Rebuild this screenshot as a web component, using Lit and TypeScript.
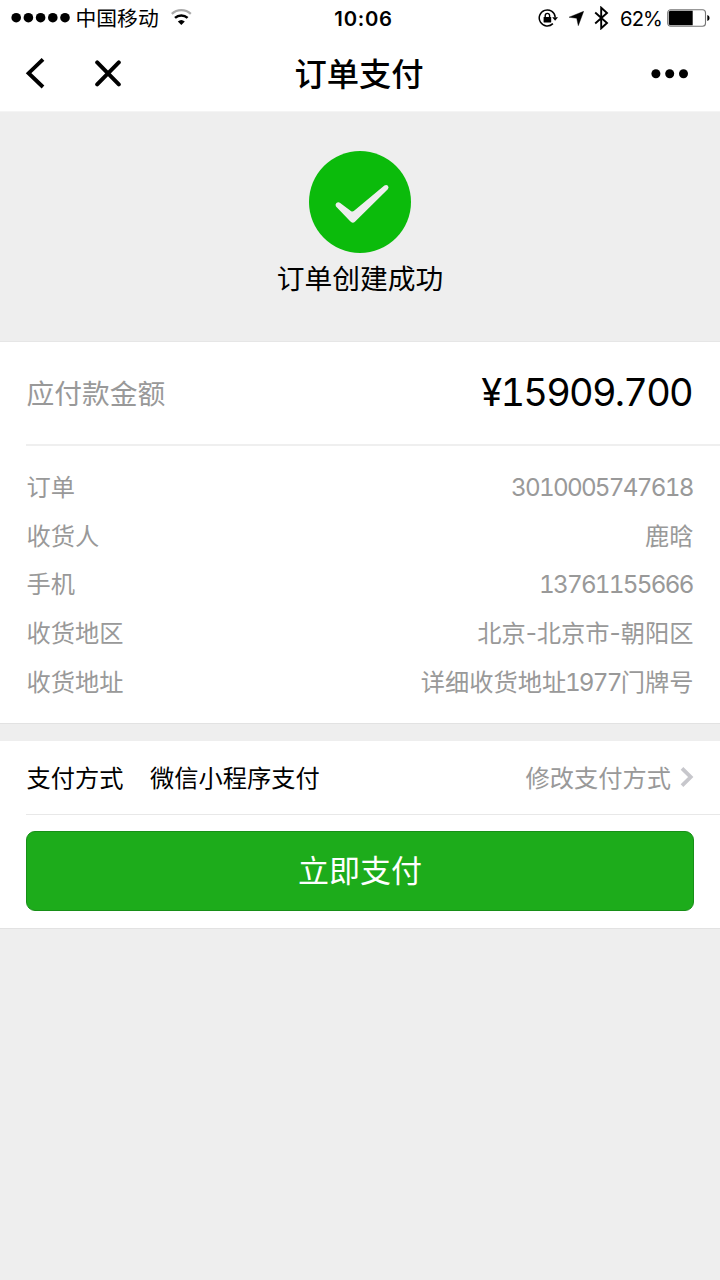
import { LitElement, html, css, svg } from "lit";
import { customElement, property } from "lit/decorators.js";

const DETAILS: [string, string][] = [
  ["订单", "3010005747618"],
  ["收货人", "鹿晗"],
  ["手机", "13761155666"],
  ["收货地区", "北京-北京市-朝阳区"],
  ["收货地址", "详细收货地址1977门牌号"],
];

// Digits run tighter than the Chinese text around them.
const tightDigits = (text: string) =>
  text
    .split(/(\d+)/)
    .filter((part) => part)
    .map((part, _, all) =>
      /\d/.test(part) ? html`<span class="num ${all.length > 1 ? "inline" : ""}">${part}</span>` : part
    );

@customElement("status-bar")
class StatusBar extends LitElement {
  static styles = css`
    :host { display: grid; grid-template-columns: 1fr auto 1fr; align-items: center; height: 36px; padding: 0 10px 0 11px; line-height: 36px; color: #000; }
    svg { display: block; flex: none; }
    .left, .right { display: flex; align-items: center; height: 36px; }
    .right { justify-content: flex-end; }
    .carrier { font-size: 20.8px; margin: 1px 0 -1px 5.5px; }
    .wifi { margin-left: 12px; }
    .time { font-size: 20.3px; font-weight: 600; letter-spacing: 0.7px; margin: 1px 0 -1px; padding-left: 6px; }
    .arrow { margin-left: 11px; }
    .bt { margin-left: 9.5px; }
    .percent { font-size: 20.2px; letter-spacing: -0.9px; margin: 1px 5px -1px 11.5px; }
  `;
  render() {
    return html`
      <div class="left">
        <svg width="59" height="12" viewBox="0 0 59 12">
          ${[0, 1, 2, 3, 4].map((i) => svg`<circle cx=${5.2 + i * 12.2} cy="5.7" r="4.8" />`)}
        </svg>
        <span class="carrier">中国移动</span>
        <svg class="wifi" width="22" height="18" viewBox="0 0 22 18" fill="none">
          <path d="M.8 4.9A14 14 0 0 1 19.8 4.9" stroke="#aaa" stroke-width="2.3" />
          <path d="M4 8.9A9.4 9.4 0 0 1 16.6 8.9" stroke="#000" stroke-width="2.5" />
          <path d="M10.3 16L6.8 12.6Q10.3 9.4 13.8 12.6Z" fill="#000" />
        </svg>
      </div>
      <div class="time">10:06</div>
      <div class="right">
        <svg width="20" height="20" viewBox="0 0 20 20" fill="none" stroke="#000">
          <path d="M14.9 15.6A8 8 0 1 1 17.2 9.2" stroke-width="1.5" />
          <path d="M14.2 9.2H20L17.1 12.8Z" fill="#000" stroke="none" />
          <rect x="5.6" y="9" width="7.6" height="5.6" rx=".6" fill="#000" stroke="none" />
          <path d="M7.2 9.4V7.6a2.2 2.2 0 0 1 4.4 0V9.4" stroke-width="1.4" />
        </svg>
        <svg class="arrow" width="15" height="15" viewBox="0 0 15 15">
          <path d="M14.7.3L0 6.2L7.7 7.3L9.3 14.7Z" stroke="#000" stroke-width=".4" />
        </svg>
        <svg class="bt" width="15" height="24" viewBox="0 0 15 24" fill="none" stroke="#000" stroke-width="1.9">
          <path d="M1.2 6.5L13 17L7.2 22.3V1.7L13 7L1.2 17.5" />
        </svg>
        <span class="percent">62%</span>
        <svg width="43" height="18" viewBox="0 0 43 18">
          <rect x=".7" y=".7" width="37.8" height="16.6" rx="3" fill="#fff" stroke="#777" stroke-width="1.1" />
          <path d="M3.4 1.8H25.7V16.2H3.4Q1.8 16.2 1.8 14.6V3.4Q1.8 1.8 3.4 1.8Z" />
          <path d="M40.3 6Q42.6 6.6 42.6 9Q42.6 11.4 40.3 12Z" />
        </svg>
      </div>
    `;
  }
}

@customElement("nav-bar")
class NavBar extends LitElement {
  @property() heading = "";
  static styles = css`
    :host { display: grid; grid-template-columns: 1fr auto 1fr; align-items: center; height: 76px; padding: 0 31px 0 25px; box-sizing: border-box; border-bottom: 1px solid #f4f4f4; color: #000; }
    svg { display: block; }
    .left { display: flex; align-items: center; gap: 48.5px; }
    .title { font-size: 32.3px; font-weight: 500; line-height: 72px; padding: 3px 0 0 4px; }
    .more { justify-self: end; }
  `;
  render() {
    return html`
      <div class="left">
        <svg width="20" height="32" viewBox="0 0 20 32" fill="none" stroke="#000" stroke-width="3.9">
          <path d="M18 1.4L3.6 15.2L18 29" />
        </svg>
        <svg width="28" height="28" viewBox="0 0 28 28" fill="none" stroke="#000" stroke-width="4" stroke-linecap="round">
          <path d="M3.2 2.4L24.8 24.4M24.8 2.4L3.2 24.4" />
        </svg>
      </div>
      <div class="title">${this.heading}</div>
      <svg class="more" width="38" height="10" viewBox="0 0 38 10">
        <circle cx="4.9" cy="4.7" r="4.5" /><circle cx="18.7" cy="4.7" r="4.5" /><circle cx="32.5" cy="4.7" r="4.5" />
      </svg>
    `;
  }
}

@customElement("app-root")
class AppRoot extends LitElement {
  static styles = css`
    :host { display: block; min-height: 1280px; background: #eee; color: #000; font-family: Inter, "Noto Sans CJK SC", sans-serif; }
    svg { display: block; flex: none; }
    .header { background: #fff; }
    .result { display: flex; flex-direction: column; align-items: center; height: 230px; padding-top: 39px; box-sizing: border-box; border-bottom: 1px solid #e6e6e6; }
    .message { font-size: 27.75px; line-height: 40px; margin-top: 6px; }
    .card { background: #fff; border-bottom: 1px solid #e2e2e2; }
    .amount { display: flex; justify-content: space-between; align-items: center; height: 104px; box-sizing: border-box; margin-left: 26px; padding: 0 28px 3px 0; border-bottom: 2px solid #efefef; }
    .label { font-size: 27.75px; color: #999; padding: 1px 0 0 0.6px; }
    .price { font-size: 38px; font-variant-numeric: tabular-nums; letter-spacing: -1.75px; }
    .details { padding: 18px 26.5px 16px 26.6px; color: #999; font-size: 24.25px; line-height: 48.65px; }
    .row { display: flex; justify-content: space-between; height: 48.65px; }
    .num { font-variant-numeric: tabular-nums; letter-spacing: -1.76px; margin-right: 0.9px; }
    .num.inline { margin: 0 0 0 -1.5px; }
    .pay { margin-top: 17px; height: 188px; box-sizing: border-box; }
    .method { display: flex; align-items: center; height: 74px; box-sizing: border-box; margin-left: 26px; padding: 0 26px 2px 0.6px; border-bottom: 1px solid #e8e8e8; font-size: 24.25px; }
    .chosen { margin-left: 26.4px; }
    .change { margin-left: auto; color: #999; }
    .chevron { margin-left: 9px; }
    .button { display: block; width: 668px; height: 80px; margin: 16px 0 0 26px; padding: 0; border: 1px solid #178f17; border-radius: 9px; background: #1dac1b; color: #fff; font: 400 31px/76px Inter, "Noto Sans CJK SC", sans-serif; }
  `;
  render() {
    return html`
      <div class="header">
        <status-bar></status-bar>
        <nav-bar heading="订单支付"></nav-bar>
      </div>
      <div class="result">
        <svg width="102" height="102" viewBox="0 0 102 102">
          <circle cx="51" cy="51" r="51" fill="#0bbb0b" />
          <path d="M27 55.5Q25.8 53.9 27.4 52.1Q29.2 50.4 31.2 51.9L42.2 60.2Q43.5 61 44.8 60.1L75.4 34.6Q77.3 33.1 78.9 34.8Q80.3 36.5 78.8 38.3L46.2 70.4Q43.6 72.9 41.2 70.3Z" fill="#eee" />
        </svg>
        <div class="message">订单创建成功</div>
      </div>
      <div class="card">
        <div class="amount"><span class="label">应付款金额</span><span class="price">¥15909.700</span></div>
        <div class="details">
          ${DETAILS.map(([k, v]) => html`<div class="row"><span>${k}</span><span>${tightDigits(v)}</span></div>`)}
        </div>
      </div>
      <div class="card pay">
        <div class="method">
          <span>支付方式</span>
          <span class="chosen">微信小程序支付</span>
          <span class="change">修改支付方式</span>
          <svg class="chevron" width="14" height="20" viewBox="0 0 14 20" fill="none" stroke="#c7c7cc" stroke-width="3.8">
            <path d="M2 1.4L10.7 10L2 18.6" />
          </svg>
        </div>
        <button class="button">立即支付</button>
      </div>
    `;
  }
}
